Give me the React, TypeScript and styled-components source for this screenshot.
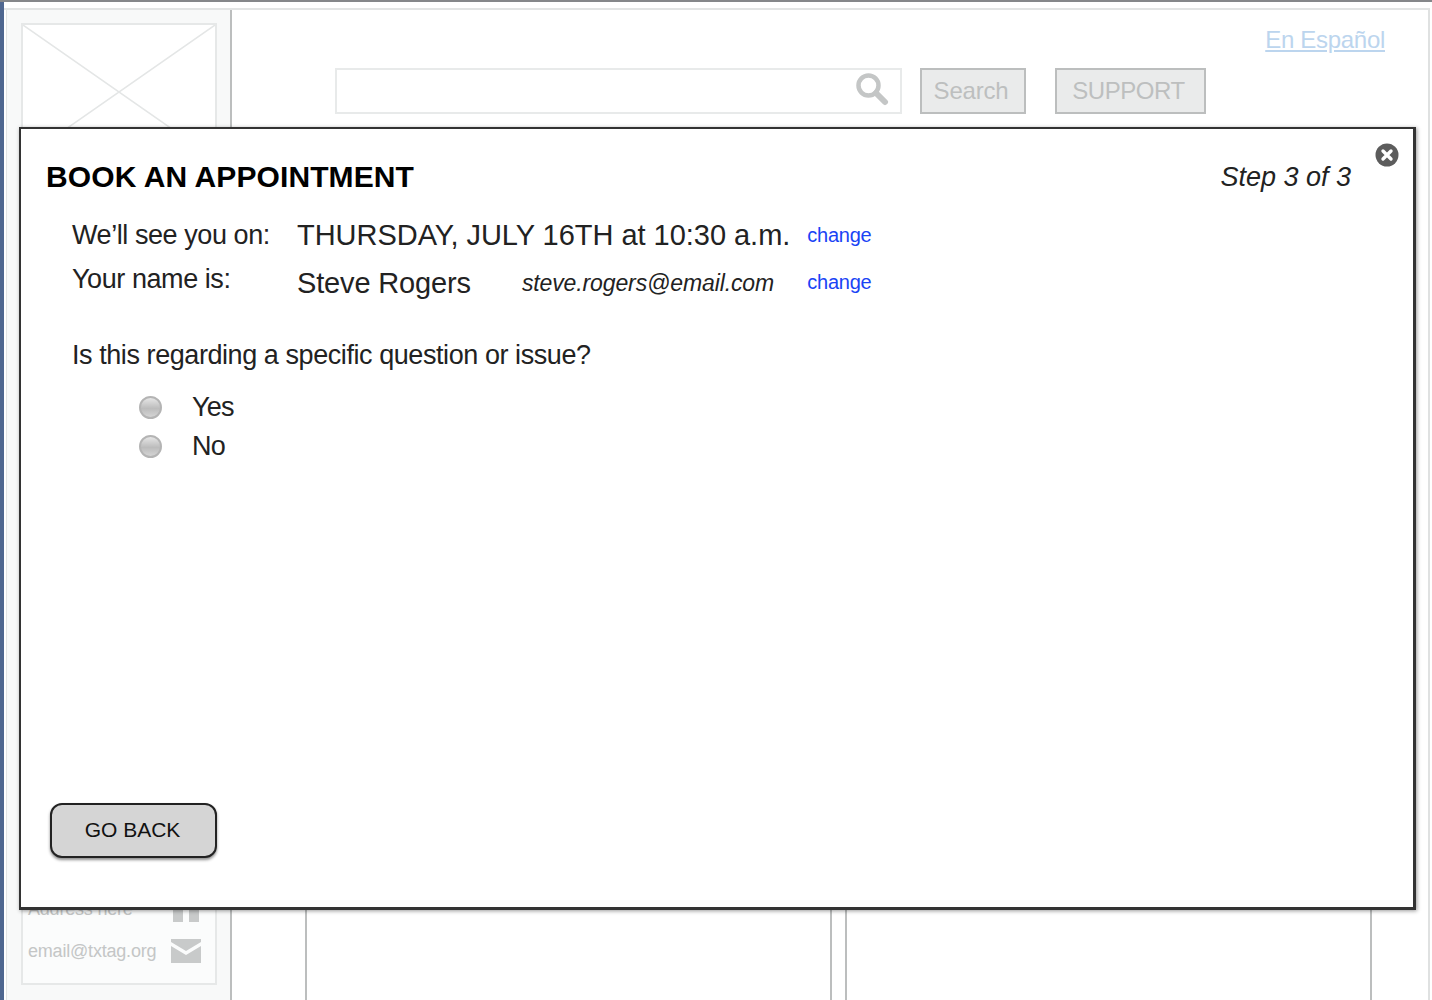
import React from "react";
import styled, { createGlobalStyle } from "styled-components";

const Global = createGlobalStyle`
  html, body { margin: 0; padding: 0; background: #fff; }
  body { font-family: "Liberation Sans", Arial, sans-serif; }
  * { box-sizing: border-box; }
`;

const Page = styled.div`
  position: relative;
  width: 1432px;
  height: 1000px;
  overflow: hidden;
  background: #fff;
  border-top: 2px solid #85878a;
  padding-top: 6px;
`;
const Desk = styled.div`
  display: flex;
  height: 992px;
  margin-right: 2px;
  border-top: 2px solid #e2e4e4;
  border-right: 2px solid #dfe1e1;
`;
const BlueEdge = styled.div`
  flex: none;
  width: 4px;
  margin-top: -10px;
  height: 1002px;
  background: #4f6790;
`;
const Sidebar = styled.aside`
  flex: none;
  width: 226px;
  margin-left: 2px;
  padding: 13px 13px 0 14px;
  background: #f8f9f9;
  border-left: 1px solid #e2e4e4;
  border-right: 2px solid #bcbebe;
  display: flex;
  flex-direction: column;
  height: 990px;
`;
const LogoBox = styled.div`
  flex: none;
  height: 138px;
  background: #fff;
  border: 2px solid #e6e8e8;
`;
const Crossed = styled.svg`
  display: block;
  width: 100%;
  height: 100%;
`;
const ContactCard = styled.div`
  margin-top: auto;
  margin-bottom: 15px;
  height: 92px;
  padding: 0 14px 19px 5px;
  background: #fbfcfc;
  border: 2px solid #e6e8e8;
  display: flex;
  flex-direction: column;
  justify-content: flex-end;
  gap: 16px;
`;
const ContactRow = styled.div`
  display: flex;
  justify-content: space-between;
  align-items: center;
  color: #c4c6c6;
  font-size: 18px;
  letter-spacing: -0.2px;
  height: 26px;
`;
const Main = styled.main`
  flex: 1;
  display: flex;
  flex-direction: column;
`;
const Lang = styled.a`
  align-self: flex-end;
  margin: 15px 43px 0 0;
  font-size: 24px;
  line-height: 30px;
  color: #bcd5ee;
  text-decoration: underline;
  letter-spacing: -0.3px;
`;
const Toolbar = styled.div`
  display: flex;
  align-items: flex-start;
  margin: 13px 0 0 103px;
`;
const SearchField = styled.div`
  width: 567px;
  height: 46px;
  border: 2px solid #e8eaea;
  background: #fff;
  display: flex;
  justify-content: flex-end;
  align-items: center;
  padding-right: 11px;
`;
const SearchIcon = styled.svg`
  margin-bottom: 4px;
`;
const GhostButton = styled.div<{ $gap: number; $w: number; $track: number }>`
  width: ${(p) => p.$w}px;
  height: 46px;
  margin-left: ${(p) => p.$gap}px;
  padding-right: 4px;
  background: #eaebeb;
  border: 2px solid #bcbebe;
  color: #bdbfbf;
  font-size: 24px;
  letter-spacing: ${(p) => p.$track}px;
  display: flex;
  align-items: center;
  justify-content: center;
`;
const Columns = styled.div`
  margin: auto 0 0 73px;
  display: flex;
  gap: 13px;
  height: 300px;
`;
const Column = styled.div`
  width: 527px;
  border: solid #bcbebe;
  border-width: 0 2px;
`;

const Modal = styled.section`
  position: absolute;
  left: 19px;
  top: 125px;
  width: 1397px;
  height: 783px;
  background: #fff;
  border: solid #333;
  border-width: 2px 3px 3px 2px;
  box-shadow: 1px 1px 4px rgba(0, 0, 0, 0.4);
  padding: 30px 62px 49px 25px;
  display: flex;
  flex-direction: column;
  color: #222;
`;
const CloseButton = styled.svg`
  position: absolute;
  right: 14px;
  top: 14px;
  width: 24px;
  height: 24px;
`;
const ModalHead = styled.header`
  display: flex;
  justify-content: space-between;
  align-items: center;
  height: 36px;
`;
const Title = styled.h1`
  margin: 0;
  font-size: 30px;
  font-weight: 700;
  letter-spacing: 0.1px;
  color: #000;
`;
const Step = styled.span`
  font-size: 27px;
  font-style: italic;
`;
const Summary = styled.div`
  margin: 22px 0 0 26px;
  display: grid;
  grid-template-columns: 225px auto auto;
  justify-content: start;
  row-gap: 11px;
  align-items: center;
`;
const Label = styled.span<{ $lift: number }>`
  font-size: 27px;
  line-height: 36px;
  letter-spacing: -0.43px;
  margin-top: ${(p) => -p.$lift}px;
`;
const Value = styled.span`
  font-size: 29px;
  line-height: 36px;
  letter-spacing: -0.03px;
`;
const NameValue = styled(Value)`
  letter-spacing: -0.15px;
`;
const Wide = styled.div`
  display: flex;
  justify-content: space-between;
  align-items: center;
  width: 477px;
  margin: 1px 0 -1px;
`;
const Email = styled.span`
  font-size: 23px;
  font-style: italic;
  letter-spacing: -0.12px;
`;
const Change = styled.a`
  margin-left: 17px;
  font-size: 20px;
  letter-spacing: -0.25px;
  color: #1a43f5;
`;
const Question = styled.p`
  margin: 37px 0 0 26px;
  font-size: 27px;
  line-height: 36px;
  letter-spacing: -0.43px;
`;
const Options = styled.div`
  margin: 16px 0 0 93px;
  display: flex;
  flex-direction: column;
  gap: 3px;
`;
const Option = styled.label`
  display: flex;
  align-items: center;
  gap: 30px;
  height: 36px;
  font-size: 27px;
  letter-spacing: -0.8px;
`;
const Radio = styled.span`
  flex: none;
  width: 23px;
  height: 23px;
  border-radius: 50%;
  border: 2px solid #b4b4b4;
  background: linear-gradient(#e6e6e6, #bcbcbc 55%, #d4d4d4);
`;
const BackButton = styled.button`
  margin: auto 0 0 4px;
  width: 167px;
  height: 55px;
  padding: 0 2px 2px 0;
  border: 2px solid #222;
  border-radius: 12px;
  background: #d5d5d5;
  box-shadow: 0 2px 3px rgba(0, 0, 0, 0.45);
  font: 400 21px "Liberation Sans", Arial, sans-serif;
  color: #111;
`;

export default function App() {
  return (
    <Page>
      <Global />
      <Desk>
        <BlueEdge />
        <Sidebar>
          <LogoBox>
            <Crossed viewBox="0 0 192 134" preserveAspectRatio="none">
              <path d="M0 0L192 134M192 0L0 134" stroke="#e4e6e6" strokeWidth="1.5" fill="none" />
            </Crossed>
          </LogoBox>
          <ContactCard>
            <ContactRow>
              Address here
              <svg width="30" height="26" viewBox="0 0 30 26" fill="#c8caca">
                <path d="M2 0H28V26H18V14H12V26H2Z" />
              </svg>
            </ContactRow>
            <ContactRow>
              email@txtag.org
              <svg width="30" height="24" viewBox="0 0 30 24" fill="#c8caca">
                <path d="M0 0H30V3L15 12L0 3ZM0 7L15 16L30 7V24H0Z" />
              </svg>
            </ContactRow>
          </ContactCard>
        </Sidebar>
        <Main>
          <Lang>En Español</Lang>
          <Toolbar>
            <SearchField>
              <SearchIcon width="34" height="34" viewBox="0 0 34 34" fill="none" stroke="#c4c6c6">
                <circle cx="13.5" cy="13.5" r="10" strokeWidth="4.5" />
                <path d="M21 21L30 30" strokeWidth="6" strokeLinecap="round" />
              </SearchIcon>
            </SearchField>
            <GhostButton $gap={18} $w={106} $track={-0.2}>Search</GhostButton>
            <GhostButton $gap={29} $w={151} $track={-0.45}>SUPPORT</GhostButton>
          </Toolbar>
          <Columns>
            <Column />
            <Column />
          </Columns>
        </Main>
      </Desk>
      <Modal>
        <CloseButton viewBox="0 0 24 24">
          <circle cx="12" cy="12" r="11.5" fill="#5c5c5c" />
          <path d="M8 8L16 16M16 8L8 16" stroke="#fff" strokeWidth="3.4" strokeLinecap="round" />
        </CloseButton>
        <ModalHead>
          <Title>BOOK AN APPOINTMENT</Title>
          <Step>Step 3 of 3</Step>
        </ModalHead>
        <Summary>
          <Label $lift={0}>We’ll see you on:</Label>
          <Value>THURSDAY, JULY 16TH at 10:30 a.m.</Value>
          <Change>change</Change>
          <Label $lift={6}>Your name is:</Label>
          <Wide>
            <NameValue>Steve Rogers</NameValue>
            <Email>steve.rogers@email.com</Email>
          </Wide>
          <Change>change</Change>
        </Summary>
        <Question>Is this regarding a specific question or issue?</Question>
        <Options>
          <Option><Radio />Yes</Option>
          <Option><Radio />No</Option>
        </Options>
        <BackButton>GO BACK</BackButton>
      </Modal>
    </Page>
  );
}
